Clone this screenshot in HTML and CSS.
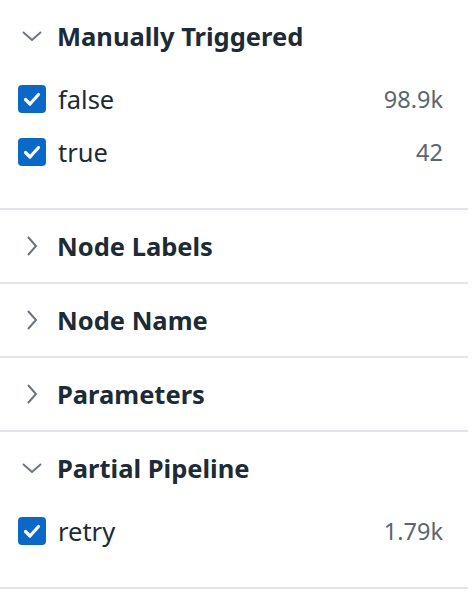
FILE: index.html
```html
<!DOCTYPE html>
<html>
<head>
<meta charset="utf-8">
<link rel="stylesheet" href="styles.css">
</head>
<body>
<div class="panel">
  <section class="facet">
    <div class="facet-head">
      <span class="chev"><svg width="20" height="20" viewBox="0 0 20 20"><polyline points="1,6 10,14 19,6" fill="none" stroke="#6b747d" stroke-width="2"/></svg></span>
      <span class="title">Manually Triggered</span>
    </div>
    <div class="items">
      <div class="item">
        <span class="cb"><svg width="28" height="28" viewBox="0 0 28 28"><polyline points="7.5,14.5 12,19 20.5,9.5" fill="none" stroke="#fff" stroke-width="3.2" stroke-linecap="round" stroke-linejoin="round"/></svg></span>
        <span class="label">false</span>
        <span class="count">98.9k</span>
      </div>
      <div class="item">
        <span class="cb"><svg width="28" height="28" viewBox="0 0 28 28"><polyline points="7.5,14.5 12,19 20.5,9.5" fill="none" stroke="#fff" stroke-width="3.2" stroke-linecap="round" stroke-linejoin="round"/></svg></span>
        <span class="label">true</span>
        <span class="count">42</span>
      </div>
    </div>
  </section>
  <section class="facet">
    <div class="facet-head">
      <span class="chev"><svg width="20" height="20" viewBox="0 0 20 20"><polyline points="6,1 14,10 6,19" fill="none" stroke="#6b747d" stroke-width="2"/></svg></span>
      <span class="title">Node Labels</span>
    </div>
  </section>
  <section class="facet">
    <div class="facet-head">
      <span class="chev"><svg width="20" height="20" viewBox="0 0 20 20"><polyline points="6,1 14,10 6,19" fill="none" stroke="#6b747d" stroke-width="2"/></svg></span>
      <span class="title">Node Name</span>
    </div>
  </section>
  <section class="facet">
    <div class="facet-head">
      <span class="chev"><svg width="20" height="20" viewBox="0 0 20 20"><polyline points="6,1 14,10 6,19" fill="none" stroke="#6b747d" stroke-width="2"/></svg></span>
      <span class="title">Parameters</span>
    </div>
  </section>
  <section class="facet">
    <div class="facet-head">
      <span class="chev"><svg width="20" height="20" viewBox="0 0 20 20"><polyline points="1,6 10,14 19,6" fill="none" stroke="#6b747d" stroke-width="2"/></svg></span>
      <span class="title">Partial Pipeline</span>
    </div>
    <div class="items">
      <div class="item">
        <span class="cb"><svg width="28" height="28" viewBox="0 0 28 28"><polyline points="7.5,14.5 12,19 20.5,9.5" fill="none" stroke="#fff" stroke-width="3.2" stroke-linecap="round" stroke-linejoin="round"/></svg></span>
        <span class="label">retry</span>
        <span class="count">1.79k</span>
      </div>
    </div>
  </section>
</div>
</body>
</html>
```
FILE: styles.css
```css
html, body {
  margin: 0;
  padding: 0;
  background: #fff;
}
body {
  font-family: "Noto Sans", "Open Sans", sans-serif;
  color: #1c2b36;
}
.panel {
  width: 468px;
}
.facet {
  border-bottom: 2px solid #e2e3ec;
}
.facet-head {
  height: 72px;
  display: flex;
  align-items: center;
  padding-left: 22px;
  gap: 15px;
}
.chev {
  width: 20px;
  height: 20px;
  display: flex;
}
.title {
  font-size: 25.5px;
  font-weight: 700;
  color: #1c2b36;
}
.items {
  padding-bottom: 30px;
}
.item {
  height: 53px;
  display: flex;
  align-items: center;
  padding-left: 18px;
  padding-right: 25px;
}
.cb {
  width: 28px;
  height: 28px;
  border-radius: 4px;
  background: #0a68c8;
  display: flex;
}
.label {
  margin-left: 12px;
  font-size: 25.5px;
  flex: 1;
}
.count {
  font-size: 23.5px;
  color: #5c6670;
}
```
